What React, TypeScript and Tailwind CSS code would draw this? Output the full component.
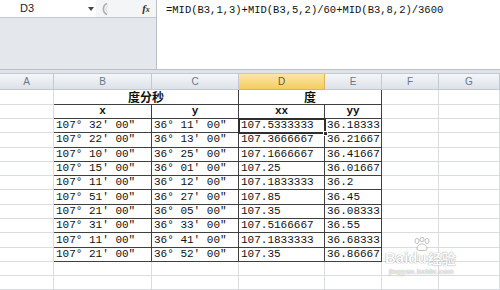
import React from 'react';

const DARK = 'border-[#3f3f3f]';
const GRID = 'border-[#d9dce0]';

const colW = ['w-[54px]', 'w-[98px]', 'w-[87px]', 'w-[86px]', 'w-[57px]', 'w-[57px]', 'w-[61px]'];

const rows = [
  ['107° 32′ 00″', '36° 11′ 00″', '107.5333333', '36.18333'],
  ['107° 22′ 00″', '36° 13′ 00″', '107.3666667', '36.21667'],
  ['107° 10′ 00″', '36° 25′ 00″', '107.1666667', '36.41667'],
  ['107° 15′ 00″', '36° 01′ 00″', '107.25', '36.01667'],
  ['107° 11′ 00″', '36° 12′ 00″', '107.1833333', '36.2'],
  ['107° 51′ 00″', '36° 27′ 00″', '107.85', '36.45'],
  ['107° 21′ 00″', '36° 05′ 00″', '107.35', '36.08333'],
  ['107° 31′ 00″', '36° 33′ 00″', '107.5166667', '36.55'],
  ['107° 11′ 00″', '36° 41′ 00″', '107.1833333', '36.68333'],
  ['107° 21′ 00″', '36° 52′ 00″', '107.35', '36.86667'],
];

const mono = 'font-["Liberation_Mono","DejaVu_Sans_Mono",monospace] text-[11px] text-[#111] leading-none';
const cjk = 'font-["Noto_Sans_CJK_SC",sans-serif]';
const glow = '[text-shadow:0_0_1px_#8a8a8a,0_0_1px_#8a8a8a]';

function Cell({
  w, r, b, children, className = '', clip = true,
}: { w: string; r: string; b: string; children?: React.ReactNode; className?: string; clip?: boolean }) {
  return (
    <div
      className={`${w} h-full shrink-0 border-r border-b ${r} ${b} flex items-center whitespace-nowrap ${
        clip ? 'overflow-hidden' : 'overflow-visible'
      } ${className}`}
    >
      {children}
    </div>
  );
}

function EmptyRow({ h }: { h: string }) {
  return (
    <div className={`flex ${h}`}>
      {colW.map((w, i) => (
        <Cell key={i} w={w} r={GRID} b={GRID} />
      ))}
    </div>
  );
}

export default function App() {
  const letters = ['A', 'B', 'C', 'D', 'E', 'F', 'G'];
  return (
    <div className="relative w-[500px] h-[290px] overflow-hidden bg-white">
      {/* formula bar */}
      <div className="flex h-[70px] border-b border-[#b9c0c9]">
        <div className="w-[157px] shrink-0 flex flex-col bg-[#e4e7eb] border-r border-[#b9c0c9]">
          <div className="flex h-[18px] items-center border-b border-[#c3c9d1]">
            <div className="w-[86px] h-full bg-white flex items-center pl-[20px] font-['Liberation_Sans',sans-serif] text-[11px] text-[#222]">
              D3
            </div>
            <div className="w-[10px] h-full bg-white flex items-center justify-center">
              <svg width="6" height="4" viewBox="0 0 6 4">
                <path d="M0 0h6L3 4z" fill="#444" />
              </svg>
            </div>
            <div className="w-[40px] h-full bg-[#f4f5f7] flex items-center pl-[2px]">
              <svg width="12" height="14" viewBox="0 0 12 14">
                <path d="M9 1.5A6 6 0 0 0 9 12.5" fill="none" stroke="#a9aeb5" strokeWidth="1.6" />
                <path d="M10 3.5A4 4 0 0 0 10 10.5" fill="none" stroke="#d0d3d8" strokeWidth="1" />
              </svg>
            </div>
            <div className="flex-1 h-full bg-[#f4f5f7] flex items-center justify-center font-['Liberation_Serif',serif] italic font-bold text-[11px] text-[#333]">
              f<span className="text-[8px] mt-[3px]">x</span>
            </div>
          </div>
        </div>
        <div className="flex-1 bg-white pl-[9px] pt-[3px] font-['Liberation_Mono',monospace] text-[10.5px] text-[#111]">
          =MID(B3,1,3)+MID(B3,5,2)/60+MID(B3,8,2)/3600
        </div>
      </div>
      <div className="h-[4px] bg-[#dfe3e8] border-b border-[#c3c9d1]" />

      {/* column headers */}
      <div className="flex h-[16px]">
        {letters.map((l, i) => (
          <div
            key={l}
            className={`${colW[i]} shrink-0 h-full border-r border-b flex items-center justify-center font-['Liberation_Sans',sans-serif] text-[10px] ${
              i === 3
                ? 'bg-gradient-to-b from-[#fbe6a6] to-[#f5cd5e] border-[#d9b45a] text-[#6b5a2a]'
                : 'bg-gradient-to-b from-[#f4f6f9] to-[#dde2e9] border-[#c3c9d1] text-[#6a778a]'
            }`}
          >
            {l}
          </div>
        ))}
      </div>

      {/* row 1: titles */}
      <div className="flex h-[15px]">
        <Cell w={colW[0]} r={DARK} b={GRID} />
        <Cell w="w-[185px]" r={DARK} b={DARK} clip={false} className={`justify-center font-bold text-[12px] leading-none text-[#111] ${cjk}`}>
          度分秒
        </Cell>
        <Cell w="w-[143px]" r={DARK} b={DARK} clip={false} className={`justify-center font-bold text-[12px] leading-none text-[#111] ${cjk}`}>
          度
        </Cell>
        <Cell w={colW[5]} r={GRID} b={GRID} />
        <Cell w={colW[6]} r={GRID} b={GRID} />
      </div>

      {/* row 2: sub headers */}
      <div className="flex h-[14px]">
        <Cell w={colW[0]} r={DARK} b={GRID} />
        {['x', 'y', 'xx', 'yy'].map((t, i) => (
          <Cell key={t} w={colW[i + 1]} r={DARK} b={DARK} className={`justify-center font-bold ${mono}`}>
            {t}
          </Cell>
        ))}
        <Cell w={colW[5]} r={GRID} b={GRID} />
        <Cell w={colW[6]} r={GRID} b={GRID} />
      </div>

      {/* data rows */}
      {rows.map((row, ri) => (
        <div key={ri} className="flex h-[14.3px]">
          <Cell w={colW[0]} r={DARK} b={GRID} />
          {row.map((v, ci) => (
            <Cell key={ci} w={colW[ci + 1]} r={DARK} b={DARK} className={`pl-[2px] ${mono}`}>
              {v}
            </Cell>
          ))}
          <Cell w={colW[5]} r={GRID} b={GRID} />
          <Cell w={colW[6]} r={GRID} b={GRID} />
        </div>
      ))}

      <EmptyRow h="h-[14px]" />
      <EmptyRow h="h-[14px]" />

      {/* selected cell D3 */}
      <div className="absolute left-[238px] top-[118px] w-[88px] h-[16px] border-2 border-[#2f2f2f]" />
      <div className="absolute left-[323px] top-[131px] w-[5px] h-[5px] bg-[#2f2f2f] border border-white" />

      {/* watermark */}
      <div className="absolute left-[385px] top-[250px] flex flex-col items-start opacity-80">
        <div className="flex items-end leading-none">
          <span className={`font-['Liberation_Sans',sans-serif] font-bold text-[15px] text-white ${glow}`}>Bai</span>
          <span className={`relative font-['Liberation_Sans',sans-serif] font-bold text-[15px] text-white ${glow}`}>
            <svg className="absolute left-[5px] -top-[13px]" width="18" height="14" viewBox="0 0 18 14">
              <g fill="#fff" stroke="#9a9a9a" strokeWidth="0.8">
                <ellipse cx="4" cy="4" rx="2" ry="2.5" />
                <ellipse cx="9" cy="2.5" rx="2" ry="2.3" />
                <ellipse cx="14" cy="4" rx="2" ry="2.5" />
                <path d="M4 12c0-4 3-5 5-5s5 1 5 5c0 1.5-2 1.5-5 1.5S4 13.5 4 12z" />
              </g>
            </svg>
            du
          </span>
          <span className={`${cjk} font-bold text-[14px] text-white ml-[1px] ${glow}`}>经验</span>
        </div>
        <div className={`font-['Liberation_Sans',sans-serif] text-[7px] leading-none text-white mt-[3px] ml-[4px] tracking-[0.5px] ${glow}`}>
          jingyan.baidu.com
        </div>
      </div>
    </div>
  );
}
